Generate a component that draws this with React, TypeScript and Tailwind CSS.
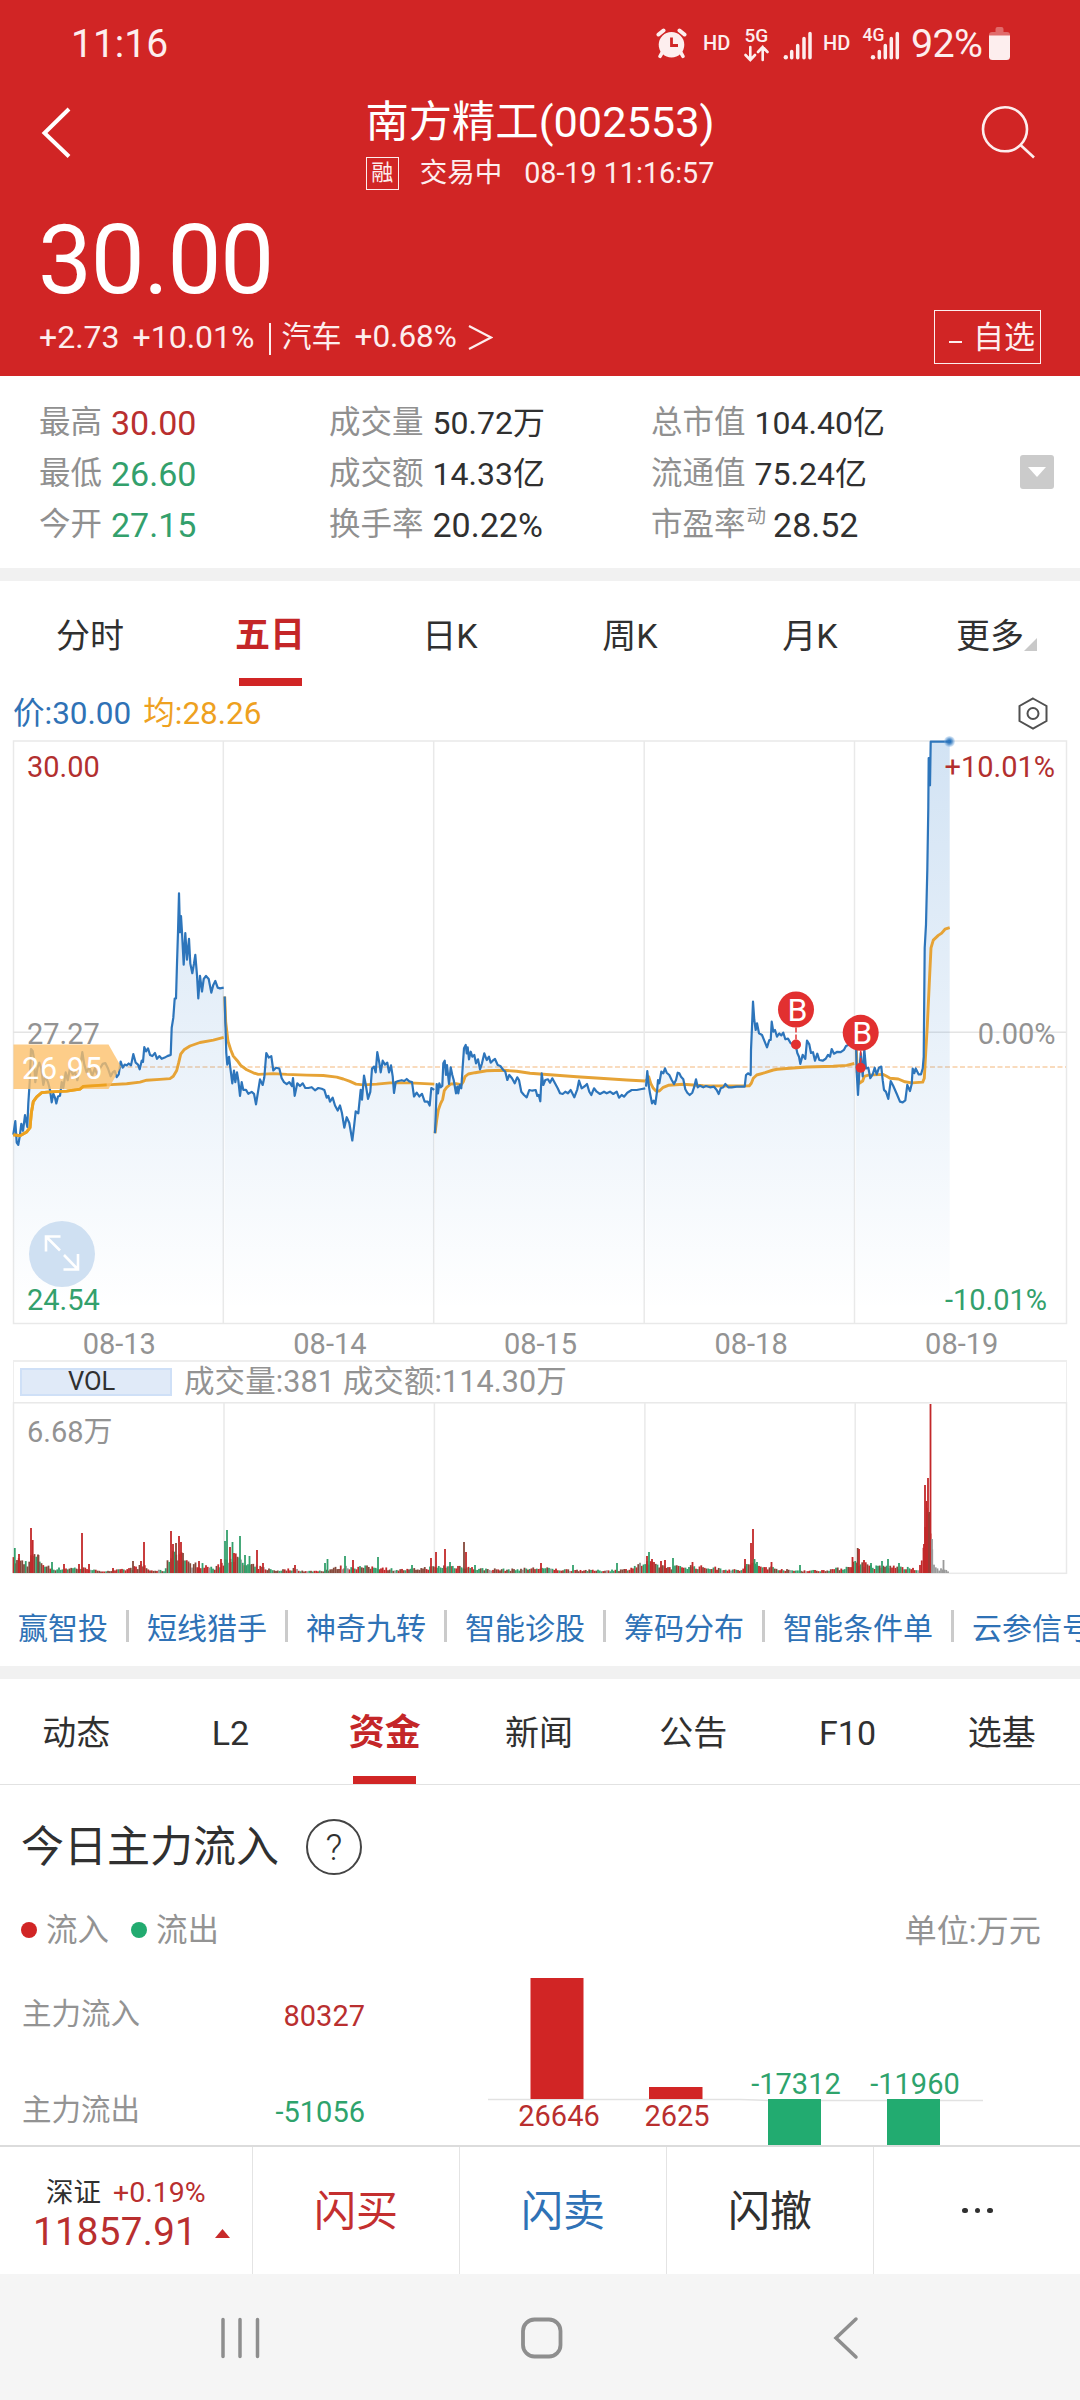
import React from "react";

type Pt = [number, number];

const parse = (s: string, sx: number, ox: number, sy: number, oy: number): Pt[] =>
  s
    .trim()
    .split(/\s+/)
    .map((p) => {
      const [x, y] = p.split(",").map(Number);
      return [ox + x / sx, oy + y / sy] as Pt;
    });

const left = (s: string) => parse(s, 3, 0, 2.57, 730);
const mid = (s: string) => parse(s, 3, 420, 3, 960);
const right = (s: string) => parse(s, 3, 720, 2.57, 730);

const price: Pt[][] = [
  left(
    "40,1040 46,1005 50,1060 55,1066 60,1040 64,1012 69,1030 75,990 82,1020 85,960 89,905 93,820 98,825 102,845 106,905 112,870 118,855 124,870 130,912 136,890 144,905 150,925 155,957 160,935 165,945 169,960 174,942 180,940 185,905 190,920 197,880 203,900 210,870 218,885 226,880 232,900 240,870 247,828 253,860 260,880 268,865 276,890 284,870 292,885 300,870 308,858 316,856 324,870 332,890 338,880 344,876 350,892 356,885 362,852 368,868 374,860 380,862 386,857 393,862 400,833 407,855 414,860 419,872 425,850 429,853 433,815 438,826 444,818 450,835 457,838 465,830 471,845 478,838 485,845 494,842 502,838 512,835 515,765 520,740 524,690 528,690 531,600 534,520 537,420 540,520 543,478 546,520 551,603 556,522 561,590 567,537 571,600 577,625 582,600 586,578 591,630 595,690 600,632 606,672 611,640 618,632 626,640 634,675 640,655 646,645 653,662 660,664 671,662"
  ),
  left(
    "674,685 676,750 679,830 682,860 687,840 691,868 697,908 702,875 706,905 711,880 715,900 720,940 725,905 730,925 738,925 745,935 755,930 762,935 768,962 774,930 780,898 788,912 793,893 799,830 806,842 814,838 820,875 828,868 838,870 845,895 852,905 860,910 868,905 876,915 879,895 884,940 892,908 900,915 908,908 916,920 925,920 935,918 945,926 955,920 965,922 973,925 980,945 985,940 990,955 998,945 1005,965 1013,978 1020,965 1026,985 1033,1022 1040,995 1048,1010 1057,1055 1062,1020 1067,980 1075,985 1082,925 1086,950 1092,888 1098,915 1104,948 1111,930 1116,870 1122,865 1127,880 1132,828 1138,855 1142,880 1148,850 1155,860 1162,855 1167,880 1173,862 1178,890 1182,933 1187,905 1195,902 1205,900 1213,902 1220,897 1228,903 1236,905 1242,942 1250,932 1258,942 1266,935 1274,955 1283,955 1289,965 1294,920 1303,925"
  ),
  mid(
    "45,520 48,440 50,372 54,400 58,370 62,382 67,378 70,310 74,302 78,345 81,315 87,372 92,322 97,345 101,360 108,400 112,380 115,400 119,375 124,385 128,320 132,265 137,255 140,280 143,262 147,298 152,275 157,290 163,285 168,310 174,298 180,328 186,310 193,280 200,300 207,290 212,308 218,302 225,297 233,315 241,318 250,330 256,335 262,360 268,345 276,355 284,370 292,352 297,360 304,395 312,405 320,412 328,390 337,392 347,390 352,408 356,405 361,424 365,340 370,375 376,360 384,358 390,368 397,355 405,370 413,385 420,400 428,402 436,395 444,400 452,390 463,412 472,388 477,362 485,385 495,378 501,372 508,395 514,405 522,385 530,395 540,402 552,395 560,400 570,395 580,402 590,395 597,413 605,405 612,410 622,398 635,390 650,390 665,387 676,385"
  ),
  [
    ...mid(
      "678,380 682,333 686,375 690,400 696,430 701,422 706,432 711,395 714,360 718,370 724,335 730,340 735,325 740,338 748,345 755,360 762,372 768,360 773,338 778,340 783,350 790,358 796,388 802,398 809,405 817,398 823,380 828,358 833,382 840,377 850,382 858,378 870,382 882,380 890,390 896,402 902,385 910,382 916,372 925,382 935,382 950,380 974,380 978,345 984,340 992,345 993,270 996,200 999,125 1003,180 1007,210 1011,190 1017,220 1026,225 1034,245 1041,262 1048,240 1052,240 1055,185 1060,215 1065,210 1071,230 1076,222"
    ),
    ...right(
      "178,780 184,785 190,778 196,795 204,793 212,805 220,808 227,810 232,830 237,840 241,858 248,835 256,845 261,798 268,808 273,830 279,828 285,850 292,832 298,848 308,850 317,845 324,835 330,840 335,820 342,832 352,827 362,828 372,822 378,812 388,808 403,806"
    ),
  ],
  right(
    "408,800 410,880 414,938 418,880 422,830 428,890 433,820 438,870 445,868 451,895 458,885 464,868 470,885 477,868 484,865 488,900 492,925 498,930 505,948 512,902 520,915 530,935 540,955 548,957 556,952 562,912 570,928 575,910 578,870 583,882 587,870 596,885 603,885 608,870 611,840 614,560 618,500 622,360 625,200 626,72 629,72 630,142 632,30 689,30"
  ),
];

const average: Pt[][] = [
  left(
    "40,1040 60,1043 80,1033 90,1022 94,985 100,955 110,943 125,932 150,930 200,928 240,923 250,916 320,912 380,909 420,905 440,900 480,898 510,896 520,890 530,875 536,855 542,833 552,822 570,812 600,803 640,797 671,790"
  ),
  left(
    "674,685 677,750 684,800 692,822 700,838 712,850 722,862 740,873 760,881 775,885 820,883 860,885 920,887 970,888 1010,892 1030,897 1050,903 1068,910 1090,912 1130,910 1170,907 1230,907 1303,910"
  ),
  mid(
    "45,520 50,480 55,450 62,430 68,418 73,392 80,382 92,372 108,371 124,374 130,365 135,350 145,342 165,338 200,332 250,331 290,334 330,340 400,345 470,350 540,355 620,360 676,363"
  ),
  [
    ...mid(
      "678,363 686,350 692,370 700,385 708,393 718,393 730,382 745,376 790,373 850,377 950,378 988,377 994,370 1000,355 1010,345 1035,338 1060,330"
    ),
    ...right("172,872 200,870 260,866 340,864 380,862 403,857"),
  ],
  right(
    "408,800 412,880 418,908 428,902 433,890 445,887 490,885 500,890 510,895 535,897 555,904 575,907 608,905 613,895 617,830 622,760 628,650 633,560 640,540 655,528 665,522 675,512 689,508"
  ),
];

const toPath = (pts: Pt[]) => pts.map(([x, y], i) => `${i ? "L" : "M"}${x.toFixed(1)} ${y.toFixed(1)}`).join("");

const RED = "#c2282a";
const GREEN = "#33a06c";
const BROWN = "#84483a";
const GRAY = "#9a9a9a";

// Ordinary minute volume: [x, typical height], interpolated linearly.
const envelope: Pt[] = [
  [13, 15], [18, 16], [28, 12], [33, 22], [40, 16], [46, 8], [55, 5], [75, 6], [92, 5], [98, 2], [125, 4], [136, 7], [144, 9], [150, 3],
  [165, 3], [172, 28], [182, 22], [188, 11], [205, 9], [215, 5], [224, 14], [232, 22], [245, 10], [260, 7], [275, 3], [295, 5], [305, 2],
  [324, 3], [340, 7], [360, 7], [378, 7], [395, 4], [410, 4], [425, 6], [445, 8], [465, 8], [475, 5], [510, 4], [540, 6], [560, 4],
  [600, 3], [625, 4], [645, 12], [655, 10], [668, 7], [690, 8], [715, 6], [740, 3], [750, 12], [760, 8], [775, 6], [790, 3], [820, 3],
  [845, 6], [853, 12], [862, 12], [875, 7], [888, 8], [905, 6], [918, 4], [922, 12], [924, 60], [930, 65], [933, 12], [937, 5], [945, 4], [949, 1],
];

const spikes: [number, number, string][] = [
  [14.8, 25, GREEN], [19, 19, RED], [31, 45, RED], [32.7, 33, RED], [38.5, 18, BROWN], [52, 11, GREEN], [64, 9, RED], [79, 9, RED],
  [82, 40, RED], [89, 9, RED], [113, 5, RED], [133, 12, BROWN], [141, 12, RED], [144, 31, RED], [171, 42, RED], [173, 29, RED],
  [176, 30, BROWN], [179, 37, RED], [181, 31, RED], [183, 20, BROWN], [199, 12, RED], [221, 14, RED], [225, 32, GREEN],
  [227, 43, GREEN], [230, 26, RED], [232.5, 31, GREEN], [234, 20, RED], [240, 37, GREEN], [245, 18, GREEN], [249.5, 17, GREEN],
  [257, 23, RED], [263, 10, RED], [295, 8, RED], [325, 10, GREEN], [327.5, 14, GREEN], [345, 17, GREEN], [353, 13, RED], [378, 16, GREEN],
  [412, 8, GREEN], [431, 15, RED], [436, 21, RED], [445, 24, RED], [450, 11, GREEN], [464, 31, BROWN], [466, 21, RED], [475, 8, GREEN],
  [541, 10, RED], [573, 8, GREEN], [617, 10, GREEN], [640, 10, GRAY], [647, 17, RED], [649, 21, GREEN], [652, 14, RED], [661, 12, RED],
  [665, 13, RED], [673, 15, GREEN], [692.5, 11, RED], [745, 14, RED], [751, 30, RED], [753, 44, RED], [754.5, 14, GREEN],
  [757, 11, GREEN], [771.5, 11, RED], [800, 8, GREEN], [852.5, 16, RED], [857.7, 25, BROWN], [859, 24, RED], [864, 13, RED],
  [871, 10, GREEN], [882, 12, GREEN], [888, 14, GREEN], [899, 10, GREEN], [924, 29, RED], [925, 88, RED], [926.5, 72, RED],
  [928, 95, RED], [929.3, 61, BROWN], [930.5, 169, RED], [932, 34, GRAY], [943.5, 13, GRAY],
];

function buildVolume() {
  const bars: [number, number, string][] = [];
  let seed = 7;
  const rnd = () => {
    seed = (seed * 16807) % 2147483647;
    return seed / 2147483647;
  };
  let k = 0;
  for (let x = 13.5; x < 949; x += 1.75) {
    while (k < envelope.length - 2 && envelope[k + 1][0] < x) k++;
    const [x0, h0] = envelope[k];
    const [x1, h1] = envelope[k + 1];
    const h = h0 + ((h1 - h0) * (x - x0)) / (x1 - x0);
    const c = rnd();
    const color = x > 931 ? GRAY : x > 919 ? RED : c < 0.36 ? RED : c < 0.68 ? GREEN : c < 0.94 ? BROWN : GRAY;
    bars.push([x, Math.max(1.5, h * (0.5 + 0.6 * rnd())), color]);
  }
  return [...bars, ...spikes];
}

const volume = buildVolume();
const gridX = [223.3, 433.7, 644.2, 854.5];

function StatusBar() {
  return (
    <div className="flex h-[88px] items-center pl-[71px] pr-[69px] text-[#fdeeee]">
      <span className="text-[39px] leading-none">11:16</span>
      <svg className="ml-auto" width="355" height="88" viewBox="656 0 355 88" fill="#fdeeee">
        <circle cx="671.5" cy="44.8" r="12.8" />
        <g stroke="#fdeeee" strokeWidth="4" strokeLinecap="round" fill="none">
          <path d="M658.5 34.5L663.5 30.5M684.5 34.5L679.5 30.5" />
          <path d="M662.5 52L660 56.3M680.5 52L683 56.3" strokeWidth="3.6" />
          <path d="M671.5 37.5V45.5H678" stroke="#d12525" strokeWidth="2.8" strokeLinecap="butt" />
          <path d="M750.3 47V60M745.5 55L750.3 60L755 55M762.7 60V47M758 52L762.7 47L767.5 52" strokeWidth="2.6" />
          <path d="M791.7 51.5V57.8M797.7 45.5V57.8M804 38.5V57.8M810 33.5V57.8" strokeWidth="3.5" />
          <path d="M879.3 51.5V57.8M885.3 45.5V57.8M891.3 38.5V57.8M897.3 33.5V57.8" strokeWidth="3.5" />
        </g>
        <circle cx="785.8" cy="57.3" r="2.2" />
        <circle cx="873" cy="57.3" r="2.2" />
        <g fontFamily="Roboto" fontWeight="500">
          <text x="703" y="50" fontSize="20">HD</text>
          <text x="744.5" y="42.3" fontSize="19">5G</text>
          <text x="823" y="50" fontSize="20">HD</text>
          <text x="862.5" y="41.3" fontSize="17.5">4G</text>
        </g>
        <text x="911" y="57.2" fontSize="39.5" fontFamily="Roboto" textLength="72">92%</text>
        <path d="M989 36V35Q989 32 992 32H995.500V29Q995.500 27 997.500 27H1001.500Q1003.500 27 1003.500 29V32H1007Q1010 32 1010 35V36Z" opacity="0.35" />
        <path d="M989 35.500H1010V56.500Q1010 60 1006.500 60H992.500Q989 60 989 56.500Z" />
      </svg>
    </div>
  );
}

function Header() {
  return (
    <header className="h-[376px] bg-[#d12525] text-[#fdeeee]">
      <StatusBar />
      <div className="relative flex h-[110px] justify-between">
        <svg className="ml-[38px] mt-[14px]" width="40" height="60" viewBox="0 0 40 60" fill="none" stroke="#fff" strokeWidth="4">
          <path d="M31 7L6.500 31L31 54.500" />
        </svg>
        <div className="absolute inset-x-0 top-[12px] flex flex-col items-center">
          <div className="text-[43.300px] leading-[46px] text-white">南方精工(002553)</div>
          <div className="mt-[10px] flex h-[34px] items-center text-[28.700px] leading-[34px]">
            <span className="mr-[21px] flex size-[33px] items-center justify-center border-[1.5px] border-[#fdeeee] text-[22px] leading-none">融</span>
            <span className="mr-[22px] text-[27.5px]">交易中</span>
            <span>08-19 11:16:57</span>
          </div>
        </div>
        <svg className="mr-[40px] mt-[12px]" width="60" height="64" viewBox="980 100 60 64" fill="none" stroke="#fdeeee" strokeWidth="2.600">
          <circle cx="1005" cy="129.300" r="22" />
          <path d="M1020.500 145L1034 157.500" />
        </svg>
      </div>
      <div className="flex h-[112px] items-center pl-[38px] pt-[11px] text-[96px] leading-none tracking-[-1.200px] text-white">30.00</div>
      <div className="flex h-[54px] items-center pl-[39px] pr-[39px] text-[32px] leading-none">
        <span>+2.73</span>
        <span className="ml-[13px]">+10.01%</span>
        <span className="ml-[14px] mt-[3px] h-[32px] w-[2px] bg-[#fdeeee]" />
        <span className="ml-[11px] text-[30px]">汽车</span>
        <span className="ml-[13px] text-[31.500px]">+0.68%</span>
        <svg className="ml-[10px]" width="26" height="28" viewBox="0 0 26 28" fill="none" stroke="#fdeeee" strokeWidth="2.200">
          <path d="M2 3L24 14.500L2 26" />
        </svg>
        <div className="ml-auto flex h-[54px] w-[107px] items-center border-[1.5px] border-[#fdeeee] pl-[14px] text-[31px]">
          <span className="mr-[11px] mt-[10px] h-[2.500px] w-[13px] bg-[#fdeeee]" />
          自选
        </div>
      </div>
    </header>
  );
}

function Stat({ label, value, color, sup }: { label: string; value: string; color?: string; sup?: string }) {
  const latin = /^[\d.%]+$/.test(value);
  return (
    <div className="flex h-[51px] items-center whitespace-nowrap text-[32px] leading-none">
      <span className="text-[31.500px] text-[#909090]">{label}</span>
      {sup && <span className="-mt-[16px] ml-px text-[19.500px] text-[#909090]">{sup}</span>}
      <span className={`${sup ? "ml-[7px]" : "ml-[9px]"} ${latin ? "text-[34px]" : "text-[32px]"} ${color ?? "text-[#303030]"}`}>{value}</span>
    </div>
  );
}

function Stats() {
  return (
    <section className="relative grid h-[192px] grid-cols-[290px_322px_1fr] pl-[39px] pt-[21px]">
      <div>
        <Stat label="最高" value="30.00" color="text-[#b92f2f]" />
        <Stat label="最低" value="26.60" color="text-[#33a06c]" />
        <Stat label="今开" value="27.15" color="text-[#33a06c]" />
      </div>
      <div>
        <Stat label="成交量" value="50.72万" />
        <Stat label="成交额" value="14.33亿" />
        <Stat label="换手率" value="20.22%" />
      </div>
      <div>
        <Stat label="总市值" value="104.40亿" />
        <Stat label="流通值" value="75.24亿" />
        <Stat label="市盈率" sup="动" value="28.52" />
      </div>
      <div className="absolute right-[26px] top-[79px] flex size-[34px] items-center justify-center rounded-[3px] bg-[#cbcbcb]">
        <svg width="18" height="10" viewBox="0 0 18 10" fill="#fff">
          <path d="M0 0H18L9 10Z" />
        </svg>
      </div>
    </section>
  );
}

function PeriodTabs() {
  const tabs = ["分时", "五日", "日K", "周K", "月K", "更多"];
  return (
    <nav className="grid h-[105px] grid-cols-6 grid-rows-[105px]">
      {tabs.map((t) => (
        <div key={t} className="relative flex justify-center text-[34px] leading-[110px] text-[#303030]">
          <span className={t === "五日" ? "text-[35px] font-bold text-[#c42628]" : ""}>{t}</span>
          {t === "五日" && <span className="absolute bottom-0 h-[8px] w-[63px] bg-[#d12525]" />}
          {t === "更多" && (
            <svg className="absolute right-[43px] top-[57px]" width="13" height="13" viewBox="0 0 13 13" fill="#c9c9c9">
              <path d="M13 0V13H0Z" />
            </svg>
          )}
        </div>
      ))}
    </nav>
  );
}

function BuyMark({ x, y, dotY }: { x: number; y: number; dotY: number }) {
  return (
    <g>
      <line x1={x} x2={x} y1={y + 18} y2={dotY} stroke="#e23535" strokeWidth="1.5" strokeDasharray="5 2" />
      <circle cx={x} cy={y} r="18" fill="#e23030" />
      <circle cx={x} cy={dotY} r="5" fill="#e23030" />
      <text x={x + 1.5} y={y + 11.2} fontSize="32" fill="#fff" textAnchor="middle">B</text>
    </g>
  );
}

function PriceChart() {
  return (
    <svg className="block" width="1080" height="595" viewBox="0 732 1080 595" fontFamily="Roboto" fontSize="29">
      <defs>
        <linearGradient id="area" gradientUnits="userSpaceOnUse" x1="0" y1="742" x2="0" y2="1310">
          <stop offset="0" stopColor="#2a7acb" stopOpacity="0.21" />
          <stop offset="0.5" stopColor="#2a7acb" stopOpacity="0.11" />
          <stop offset="1" stopColor="#2a7acb" stopOpacity="0" />
        </linearGradient>
        <radialGradient id="glow">
          <stop offset="0.200" stopColor="#2a74bd" />
          <stop offset="0.550" stopColor="#2a74bd" stopOpacity="0.650" />
          <stop offset="1" stopColor="#7ab0e6" stopOpacity="0.250" />
        </radialGradient>
      </defs>
      <g stroke="#e9e9e9" strokeWidth="1.500" fill="none">
        <rect x="13.500" y="741" width="1053" height="582.500" />
        <path d="M13 1032.300H1066" stroke="#e4e4e4" />
        {gridX.map((x) => (
          <path key={x} d={`M${x} 741V1323`} />
        ))}
      </g>
      <path d="M120 1067H1066" stroke="#f8cfa8" strokeWidth="1.500" strokeDasharray="5 2.500" />
      {price.map((d, i) => (
        <path key={i} d={`${toPath(d)}V1323H${d[0][0].toFixed(1)}Z`} fill="url(#area)" />
      ))}
      <text x="27" y="1044.300" fill="#939393">27.27</text>
      <text x="1055.500" y="1044.300" fill="#939393" textAnchor="end">0.00%</text>
      {average.map((d, i) => (
        <path key={i} d={toPath(d)} fill="none" stroke="#e6a336" strokeWidth="2.900" strokeLinejoin="round" />
      ))}
      {price.map((d, i) => (
        <path key={i} d={toPath(d)} fill="none" stroke="#2d75bb" strokeWidth="2.200" strokeLinejoin="round" />
      ))}
      <circle cx="949.500" cy="741.500" r="5.500" fill="url(#glow)" />
      <path d="M13.500 1044.500H108.500L121 1066.500L108.500 1089H13.500Z" fill="#fdbf68" fillOpacity="0.780" />
      <path d={toPath(average[0].filter(([x]) => x < 121))} fill="none" stroke="#eda21f" strokeWidth="2.900" />
      <text x="22" y="1078.700" fontSize="30.500" fill="#fff" textLength="80">26.95</text>
      <text x="27" y="777.300" fill="#b22f2f">30.00</text>
      <text x="1055" y="777.300" fill="#b22f2f" textAnchor="end">+10.01%</text>
      <text x="27" y="1310.300" fill="#33a06c">24.54</text>
      <text x="1047" y="1310.300" fill="#33a06c" textAnchor="end">-10.01%</text>
      <BuyMark x={796} y={1009.500} dotY={1044.500} />
      <BuyMark x={860.700} y={1032.800} dotY={1067.800} />
      <circle cx="62" cy="1254" r="33" fill="#cfe0f2" />
      <path d="M60.500 1236.500H46V1251.500M46 1236.500L60 1250.500M78 1254V1269.500H63.500M78 1269.500L64 1255" fill="none" stroke="#fff" strokeWidth="2.600" />
    </svg>
  );
}

function VolumeChart() {
  return (
    <svg className="block" width="1080" height="176" viewBox="0 1402 1080 176">
      <g stroke="#e9e9e9" strokeWidth="1.500" fill="none">
        <rect x="13.500" y="1402.800" width="1053" height="170.500" />
        {gridX.map((x) => (
          <path key={x} d={`M${x + 0.700} 1403V1573`} />
        ))}
      </g>
      {volume.map(([x, h, c], i) => (
        <rect key={i} x={x - 0.900} y={1573 - h} width="1.800" height={h} fill={c} />
      ))}
      <text x="27" y="1441.500" fontSize="29" fill="#939393">6.68万</text>
    </svg>
  );
}

function ChartSection() {
  return (
    <section>
      <div className="flex h-[46px] items-center justify-between pl-[13px] pr-[32px] pt-[9px] text-[31.500px] leading-none">
        <div className="flex gap-[12px]">
          <span className="text-[#2f72b6]">价:30.00</span>
          <span className="text-[#eea11f]">均:28.26</span>
        </div>
        <svg width="30" height="33" viewBox="0 0 30 33" fill="none" stroke="#505050" strokeWidth="2">
          <path d="M15 1.500L28.500 9V24L15 31.500L1.500 24V9Z" />
          <circle cx="15" cy="16.500" r="5.500" />
        </svg>
      </div>
      <PriceChart />
      <div className="ml-[14px] grid h-[33px] w-[1053px] grid-cols-5 text-center text-[29px] leading-[34px] text-[#939393]">
        {["08-13", "08-14", "08-15", "08-18", "08-19"].map((d) => (
          <span key={d}>{d}</span>
        ))}
      </div>
      <div className="mx-[13px] flex h-[42px] items-center border-x border-t-2 border-[#eee] pl-[6px] text-[30.500px] leading-none text-[#939393]">
        <span className="mr-[12px] flex h-[28px] w-[152px] items-center border-2 border-[#cfe0f7] bg-[#e0eaf8] pl-[46px] text-[25.500px] text-[#303030]">VOL</span>
        <span className="whitespace-pre tracking-[0.100px]">成交量:381 成交额:114.30万</span>
      </div>
      <VolumeChart />
    </section>
  );
}

function QuickLinks() {
  const links = ["赢智投", "短线猎手", "神奇九转", "智能诊股", "筹码分布", "智能条件单", "云参信号"];
  return (
    <div className="flex h-[88px] items-center overflow-hidden whitespace-nowrap pl-[18px] pt-[8px] text-[30px] leading-[40px] text-[#2f72b6]">
      {links.map((l, i) => (
        <React.Fragment key={l}>
          {i > 0 && <span className="mx-[18px] h-[32px] w-[3px] shrink-0 bg-[#cbcbcb]" />}
          <span className="shrink-0 pt-[5px]">{l}</span>
        </React.Fragment>
      ))}
    </div>
  );
}

function InfoTabs() {
  const tabs = ["动态", "L2", "资金", "新闻", "公告", "F10", "选基"];
  return (
    <nav className="grid h-[106px] grid-cols-7 grid-rows-[105px] border-b border-[#e2e2e2]">
      {tabs.map((t) => (
        <div key={t} className="relative flex justify-center pr-[2px] text-[34px] leading-[109px] text-[#303030]">
          <span className={t === "资金" ? "text-[36px] font-bold text-[#c42628]" : ""}>{t}</span>
          {t === "资金" && <span className="absolute bottom-0 h-[8px] w-[63px] bg-[#d12525]" />}
        </div>
      ))}
    </nav>
  );
}

function FlowBars() {
  return (
    <svg className="block" width="520" height="180" viewBox="480 1965 520 180" fontFamily="Roboto" fontSize="29" textAnchor="middle">
      <path d="M488 2099.500H740L770 2100.500H983" stroke="#e2e2e2" strokeWidth="1.500" fill="none" />
      <g fill="#d12525">
        <rect x="530.500" y="1978" width="53" height="121" />
        <rect x="649" y="2087" width="53.500" height="12" />
      </g>
      <g fill="#22ab70">
        <rect x="768" y="2099" width="53" height="46" />
        <rect x="887" y="2099" width="53" height="46" />
      </g>
      <g fill="#b92f2f">
        <text x="559" y="2126">26646</text>
        <text x="677" y="2126">2625</text>
      </g>
      <g fill="#2ea36c">
        <text x="796" y="2094">-17312</text>
        <text x="915" y="2094">-11960</text>
      </g>
    </svg>
  );
}

function CapitalFlow() {
  return (
    <section className="h-[360px]">
      <div className="flex items-center pl-[21px] pt-[33px] text-[#303030]">
        <h2 className="text-[43px] leading-[58px]">今日主力流入</h2>
        <span className="ml-[27px] flex size-[56px] items-center justify-center rounded-full border-[2px] border-[#444] text-[37px] font-light leading-none">?</span>
      </div>
      <div className="mt-[36px] flex h-[36px] items-center pl-[21px] pr-[39px] text-[31.500px] leading-none text-[#939393]">
        <span className="size-[16px] rounded-full bg-[#d12525]" />
        <span className="ml-[9px] pt-[2px]">流入</span>
        <span className="ml-[22px] size-[16px] rounded-full bg-[#22ab70]" />
        <span className="ml-[9px] pt-[2px]">流出</span>
        <span className="ml-auto pt-[2px] text-[32.200px]">单位:万元</span>
      </div>
      <div className="mt-[17px] flex">
        <div className="w-[480px] text-[29.500px] leading-none">
          <div className="flex h-[98px] items-center justify-between pl-[22px] pr-[115px]">
            <span className="pt-[2px] text-[#939393]">主力流入</span>
            <span className="pt-[4px] text-[29px] text-[#b92f2f]">80327</span>
          </div>
          <div className="flex h-[94px] items-center justify-between pl-[22px] pr-[115px]">
            <span className="pt-[2px] text-[#939393]">主力流出</span>
            <span className="pt-[4px] text-[29px] text-[#2ea36c]">-51056</span>
          </div>
        </div>
        <FlowBars />
      </div>
    </section>
  );
}

function TradeBar() {
  return (
    <div className="relative grid h-[129px] grid-cols-[253px_207px_207px_207px_1fr] border-t-2 border-[#dcdcdc] bg-white text-[42px] leading-[130px] [&>*]:border-[#e4e4e4]">
      <div className="border-r-[1.500px] pl-[33px] pt-[29px] leading-none text-[#b92f2f]">
        <div className="flex h-[34px] items-center pl-[13px]">
          <span className="text-[27.500px] text-[#303030]">深证</span>
          <span className="ml-[12px] text-[28.500px]">+0.19%</span>
        </div>
        <div className="mt-[2px] flex h-[40px] items-center text-[38.500px] tracking-[0.300px]">
          11857.91
          <svg className="ml-[18px] mt-[3px]" width="15" height="9" viewBox="0 0 15 9" fill="#c82a2a">
            <path d="M7.500 0L15 9H0Z" />
          </svg>
        </div>
      </div>
      <div className="h-[127px] border-r-[1.500px] text-center text-[#c42f2f]">闪买</div>
      <div className="h-[127px] border-r-[1.500px] text-center text-[#2f72b6]">闪卖</div>
      <div className="h-[127px] border-r-[1.500px] text-center text-[#303030]">闪撤</div>
      <div className="flex h-[127px] items-center justify-center gap-[7px] pl-[1px]">
        <span className="size-[5.500px] rounded-full bg-[#303030]" />
        <span className="size-[5.500px] rounded-full bg-[#303030]" />
        <span className="size-[5.500px] rounded-full bg-[#303030]" />
      </div>
    </div>
  );
}

function SystemNav() {
  return (
    <div className="flex h-[126px] items-center bg-[#f5f5f5] pl-[218px] pr-[220px] pt-[2px]">
      <svg width="44" height="44" viewBox="0 0 44 44" stroke="#8e8e8e" strokeWidth="3.500" strokeLinecap="round">
        <path d="M5 3.500V40.500M22 3.500V40.500M39.500 3.500V40.500" />
      </svg>
      <svg className="ml-[258px]" width="44" height="44" viewBox="0 0 44 44" fill="none" stroke="#8e8e8e" strokeWidth="3.800">
        <rect x="3" y="3.500" width="37.500" height="37" rx="11.500" />
      </svg>
      <svg className="ml-auto" width="28" height="44" viewBox="0 0 28 44" fill="none" stroke="#8e8e8e" strokeWidth="3.500" strokeLinecap="round">
        <path d="M24 3L4 22L24 41" />
      </svg>
    </div>
  );
}

export default function App() {
  return (
    <main className="h-[2400px] w-[1080px] overflow-hidden bg-white font-['Roboto','Noto_Sans_CJK_SC',sans-serif]">
      <Header />
      <Stats />
      <div className="h-[13px] bg-[#f1f1f1]" />
      <PeriodTabs />
      <ChartSection />
      <QuickLinks />
      <div className="h-[13px] bg-[#f1f1f1]" />
      <InfoTabs />
      <CapitalFlow />
      <TradeBar />
      <SystemNav />
    </main>
  );
}
